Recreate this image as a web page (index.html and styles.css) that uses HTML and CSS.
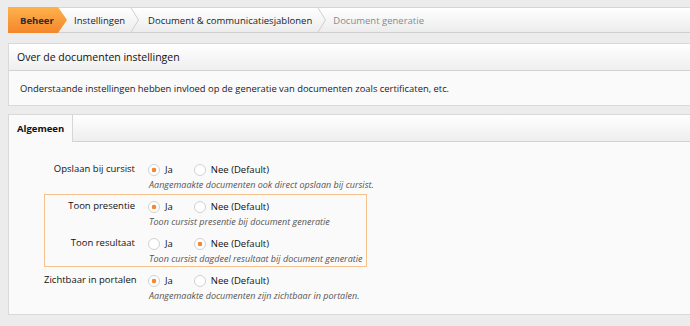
FILE: index.html
```html
<!DOCTYPE html>
<html lang="nl">
<head>
    <meta charset="UTF-8">
    <title>Document generatie</title>
    <link rel="stylesheet" href="styles.css">
</head>
<body>
<div class="page">
    <nav class="crumbs">
        <span class="crumb crumb-home">Beheer</span>
        <span class="crumb">Instellingen</span>
        <svg class="sep" width="12" height="26" viewBox="0 0 12 26"><path d="M0.5 0 L8.5 13 L0.5 26" fill="none" stroke="#cfcfcf" stroke-width="1"/></svg>
        <span class="crumb">Document &amp; communicatiesjablonen</span>
        <svg class="sep" width="12" height="26" viewBox="0 0 12 26"><path d="M0.5 0 L8.5 13 L0.5 26" fill="none" stroke="#cfcfcf" stroke-width="1"/></svg>
        <span class="crumb crumb-current">Document generatie</span>
    </nav>

    <section class="panel">
        <h2 class="panel-head">Over de documenten instellingen</h2>
        <p class="panel-body">Onderstaande instellingen hebben invloed op de generatie van documenten zoals certificaten, etc.</p>
    </section>

    <section class="panel">
        <div class="tab-bar">
            <span class="tab active">Algemeen</span>
        </div>
        <form class="settings">
            <div class="row">
                <span class="label">Opslaan bij cursist</span>
                <div class="field">
                    <div class="options">
                        <label class="opt"><input type="radio" name="opslaan" checked><span>Ja</span></label>
                        <label class="opt"><input type="radio" name="opslaan"><span>Nee (Default)</span></label>
                    </div>
                    <p class="help">Aangemaakte documenten ook direct opslaan bij cursist.</p>
                </div>
            </div>

            <div class="highlight">
                <div class="row">
                    <span class="label">Toon presentie</span>
                    <div class="field">
                        <div class="options">
                            <label class="opt"><input type="radio" name="presentie" checked><span>Ja</span></label>
                            <label class="opt"><input type="radio" name="presentie"><span>Nee (Default)</span></label>
                        </div>
                        <p class="help">Toon cursist presentie bij document generatie</p>
                    </div>
                </div>
                <div class="row">
                    <span class="label">Toon resultaat</span>
                    <div class="field">
                        <div class="options">
                            <label class="opt"><input type="radio" name="resultaat"><span>Ja</span></label>
                            <label class="opt"><input type="radio" name="resultaat" checked><span>Nee (Default)</span></label>
                        </div>
                        <p class="help">Toon cursist dagdeel resultaat bij document generatie</p>
                    </div>
                </div>
            </div>

            <div class="row">
                <span class="label">Zichtbaar in portalen</span>
                <div class="field">
                    <div class="options">
                        <label class="opt"><input type="radio" name="portalen" checked><span>Ja</span></label>
                        <label class="opt"><input type="radio" name="portalen"><span>Nee (Default)</span></label>
                    </div>
                    <p class="help">Aangemaakte documenten zijn zichtbaar in portalen.</p>
                </div>
            </div>
        </form>
    </section>
</div>
</body>
</html>
```

FILE: styles.css
```css
* {
    margin: 0;
    padding: 0;
    box-sizing: border-box;
}

body {
    background-color: #ececec;
    font-family: "Open Sans", "DejaVu Sans", sans-serif;
    color: #333;
    overflow: hidden;
}

.page {
    width: 720px;
    padding: 7px 0 0 8px;
}

/* breadcrumb */
.crumbs {
    display: flex;
    align-items: center;
    height: 26px;
    border-top: 1px solid #d6d6d6;
    border-bottom: 1px solid #d0d0d0;
    background: linear-gradient(#ffffff, #ececec);
    font-size: 9.5px;
}

.crumb {
    padding: 0 5px 0 6px;
    white-space: nowrap;
    color: #222;
}

.crumb-home {
    align-self: stretch;
    display: flex;
    align-items: center;
    width: 59px;
    margin: -1px 1px -1px 0;
    padding: 0 0 0 12px;
    font-weight: bold;
    color: #2b2b2b;
    background: linear-gradient(#fdb24c, #f5862b);
    clip-path: polygon(0 0, calc(100% - 9px) 0, 100% 50%, calc(100% - 9px) 100%, 0 100%);
}

.sep {
    flex: none;
}

.crumb-current {
    color: #8a8a8a;
    padding-left: 4px;
}

/* panels */
.panel {
    border: 1px solid #d9d9d9;
    border-right: none;
    background-color: #fafafa;
    margin-top: 10px;
}

.panel + .panel {
    margin-top: 8px;
}

.panel-head {
    height: 27px;
    padding: 0 0 0 8px;
    display: flex;
    align-items: center;
    font-size: 10.5px;
    font-weight: normal;
    color: #111;
    background: linear-gradient(#ffffff, #efefef);
    border-bottom: 1px solid #d2d2d2;
}

.panel-body {
    height: 34px;
    padding: 0 0 0 11px;
    display: flex;
    align-items: center;
    font-size: 9.4px;
    color: #222;
}

/* tabs */
.tab-bar {
    display: flex;
    height: 27px;
    background: linear-gradient(#ffffff, #eeeeee);
    border-bottom: 1px solid #d2d2d2;
}

.tab {
    display: flex;
    align-items: center;
    width: 64px;
    padding-left: 8px;
    font-size: 9.5px;
    font-weight: bold;
    color: #111;
}

.tab.active {
    background-color: #fafafa;
    border-right: 1px solid #d6d6d6;
    margin-bottom: -1px;
}

/* form */
.settings {
    display: flex;
    flex-direction: column;
    row-gap: 5px;
    padding: 18px 0 11px 35px;
}

.highlight {
    display: flex;
    flex-direction: column;
    row-gap: 5px;
    width: 323px;
    margin: -3px 0 -1px 0;
    padding-top: 2px;
    border: 1px solid #f7c28e;
}

.highlight .row {
    margin-left: -1px;
}

.row {
    display: grid;
    grid-template-columns: 91px 1fr;
    column-gap: 13px;
    height: 32px;
}

.label {
    text-align: right;
    white-space: nowrap;
    font-size: 9.5px;
    line-height: 18px;
    color: #111;
}

.options {
    display: flex;
    align-items: center;
    height: 18px;
    font-size: 9.5px;
    color: #111;
}

.opt {
    display: flex;
    align-items: center;
    column-gap: 5px;
    margin-right: 21px;
}

.opt input {
    appearance: none;
    width: 12px;
    height: 12px;
    border: 1px solid #d2d2d2;
    border-radius: 50%;
    background-color: #fff;
    margin-top: 2px;
}

.opt input:checked {
    background: radial-gradient(circle, #f7882f 0 2px, #fff 2.6px);
}

.help {
    font-size: 9px;
    font-style: italic;
    line-height: 14px;
    color: #555;
    margin-left: 1px;
}
```
